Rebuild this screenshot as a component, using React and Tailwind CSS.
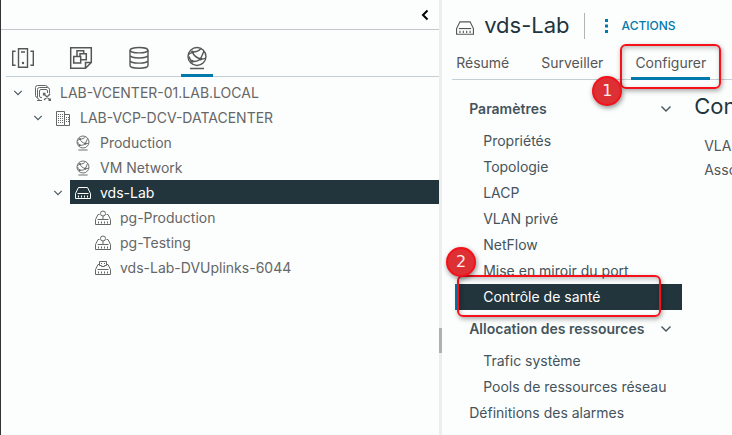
import React, { useState } from "react";

const treeItems = [
  { id: "vc", level: 0, icon: "vcenter", label: "LAB-VCENTER-01.LAB.LOCAL", open: true },
  { id: "dc", level: 1, icon: "datacenter", label: "LAB-VCP-DCV-DATACENTER", open: true },
  { id: "prod", level: 2, icon: "network", label: "Production" },
  { id: "vm", level: 2, icon: "network", label: "VM Network" },
  { id: "vds", level: 2, icon: "switch", label: "vds-Lab", open: true },
  { id: "pg1", level: 3, icon: "portgroup", label: "pg-Production" },
  { id: "pg2", level: 3, icon: "portgroup", label: "pg-Testing" },
  { id: "up", level: 3, icon: "uplink", label: "vds-Lab-DVUplinks-6044" },
];

const indents = ["pl-[7px]", "pl-[27px]", "pl-[47px]", "pl-[67px]"];

const navGroups = [
  {
    title: "Paramètres",
    items: [
      "Propriétés",
      "Topologie",
      "LACP",
      "VLAN privé",
      "NetFlow",
      "Mise en miroir du port",
      "Contrôle de santé",
    ],
  },
  {
    title: "Allocation des ressources",
    items: ["Trafic système", "Pools de ressources réseau"],
  },
];

function Chevron({ className }) {
  return (
    <svg className={className} viewBox="0 0 12 12" fill="none" stroke="currentColor" strokeWidth="1.4">
      <path d="M1.5 3.5 6 8l4.5-4.5" />
    </svg>
  );
}

function Icon({ name, className }) {
  const common = {
    className,
    fill: "none",
    stroke: "currentColor",
    "aria-hidden": true,
  };

  if (name === "hosts") {
    return (
      <svg {...common} viewBox="0 0 24 24" strokeWidth="1.4">
        <path d="M7.500 2.700h9v18.600h-9zM10 6h4M4.600 5.200H1.700v14h2.900M19.400 5.200h2.900v14h-2.900" />
        <circle cx="12" cy="17" r="1.200" fill="currentColor" stroke="none" />
      </svg>
    );
  }
  if (name === "vms") {
    return (
      <svg {...common} viewBox="0 0 24 24" strokeWidth="1.5">
        <path d="M1.700 1.700h20.600v14.800l-5.800 5.800H1.700zM22.300 16.500h-5.800v5.800" />
        <path d="M4.700 10.500h7v6.500h-7zM8 10V4.700h6.700v3M11 10V7.700h6.300v6h-5" />
      </svg>
    );
  }
  if (name === "storage") {
    return (
      <svg {...common} viewBox="0 0 24 24" strokeWidth="1.4">
        <ellipse cx="12" cy="4.200" rx="9" ry="2.700" />
        <path d="M3 4.200v15.300c0 1.500 4 2.800 9 2.800s9-1.300 9-2.800V4.200M3 9.300c0 1.500 4 2.700 9 2.700s9-1.200 9-2.700M3 14.400c0 1.500 4 2.700 9 2.700s9-1.200 9-2.700" />
      </svg>
    );
  }
  if (name === "network") {
    return (
      <svg {...common} viewBox="0 0 24 24" strokeWidth="1.4">
        <circle cx="12" cy="10.500" r="9" />
        <path d="M5 22.500h14M3.500 8.500l4-2.500M7.500 6c3.500.2 6-.8 8.500-3.500M7.500 6c1 3.500 3.500 5.500 8 7M15.500 13l3.500-8M15.500 13c-3 2.500-6 3-9 2M15.500 13c2 .2 3.500 0 5-1M7 15.500c-1.500-1.500-2.500-3-3-5" />
        <g fill="currentColor" stroke="none">
          <circle cx="7.500" cy="6" r="1.500" />
          <circle cx="15.500" cy="13" r="1.600" />
          <circle cx="7" cy="15.200" r="1.500" />
        </g>
      </svg>
    );
  }
  if (name === "vcenter") {
    return (
      <svg {...common} viewBox="0 0 16 16" strokeWidth="1">
        <path d="M2.500 12.500A2 2 0 0 1 .5 10.500v-8a2 2 0 0 1 2-2h8a2 2 0 0 1 2 2" />
        <path d="M4.500 14.500a2 2 0 0 1-2-2v-8a2 2 0 0 1 2-2h8a2 2 0 0 1 2 2v4" />
        <path d="M7 12.500H6A1.500 1.500 0 0 1 4.500 11V6A1.500 1.500 0 0 1 6 4.500h5A1.500 1.500 0 0 1 12.500 6v2M2 15.500h5" />
        <path strokeWidth="1.300" d="m9 9 6 6M15 9l-6 6M8.500 10.500v-2h2M15.500 13.500v2h-2" />
      </svg>
    );
  }
  if (name === "datacenter") {
    return (
      <svg {...common} viewBox="0 0 16 16" strokeWidth="1">
        <path d="M1.500 15.500v-14h8v14zM9.500 4.500h5v11h-5" />
        <path strokeDasharray="1 1" d="M3 4.500h5M3 6.500h5M3 8.500h5M3 10.500h5M3 12.500h5M11 7.500h3M11 9.500h3M11 11.500h3" />
      </svg>
    );
  }

  // the switch, port group and uplink icons share the same body
  return (
    <svg {...common} viewBox="0 0 16 16" strokeWidth="1">
      {name === "switch" && <path d="M3.500 2.500h9l3 6v5H.5v-5z" />}
      {name === "switch" && <path d="M2.500 8.500h11" />}
      {name !== "switch" && <path d="M4.500 4.500H3l-2.500 5v5h15v-5l-2.500-5h-1.500M2.500 9.500h11" />}
      {name === "portgroup" && <circle cx="8" cy="3.500" r="2.500" />}
      {name === "portgroup" && <path d="M8 6v3" />}
      {name === "uplink" && <path d="M4.500 1.500h7v4h-2v1h-3v-1h-2zM6.500 3v1M9.500 3v1" />}
      {name === "switch" ? (
        <path strokeWidth="2" strokeDasharray="1 2" d="M3 11.500h10.500" />
      ) : (
        <path strokeWidth="2" strokeDasharray="1 2" d="M3 12.500h10.500" />
      )}
    </svg>
  );
}

function Badge({ children, className }) {
  return (
    <span
      className={`absolute z-20 flex size-[30px] items-center justify-center rounded-full border-2 border-[#f5101a] bg-[#dc3034] font-['DejaVu_Sans'] text-base font-normal text-[#ffecec] shadow-[1px_2px_5px_rgba(0,0,0,0.45)] ${className}`}
    >
      {children}
    </span>
  );
}

function Frame({ className }) {
  return (
    <span
      className={`pointer-events-none absolute z-10 rounded-md border-2 border-[#f5101a] shadow-[1px_2px_5px_rgba(0,0,0,0.35),inset_1px_2px_5px_rgba(0,0,0,0.25)] ${className}`}
    />
  );
}

function InventoryPanel() {
  const [selected, setSelected] = useState("vds");
  const views = [
    { icon: "hosts", label: "Hôtes et clusters" },
    { icon: "vms", label: "VM et modèles" },
    { icon: "storage", label: "Stockage" },
    { icon: "network", label: "Mise en réseau" },
  ];

  return (
    <aside className="w-3/5 shrink-0 border-l border-[#333]">
      <div className="flex h-[30px] items-center justify-end border-b border-[#c1c9ce] pr-2">
        <button aria-label="Réduire" className="text-black">
          <svg className="size-3" viewBox="0 0 12 12" fill="none" stroke="currentColor" strokeWidth="2">
            <path d="M8.500 1.500 4 6l4.500 4.500" />
          </svg>
        </button>
      </div>
      <div className="ml-[5px] flex h-[47px] gap-[26px] border-b border-[#c5d0d6] pl-px text-[#565656]">
        {views.map((view) => (
          <button
            key={view.icon}
            aria-label={view.label}
            className={`-mb-px flex w-8 items-center justify-center border-b-3 pt-3 ${
              view.icon === "network" ? "border-[#0079ad]" : "border-transparent"
            }`}
          >
            <Icon name={view.icon} className="size-6" />
          </button>
        ))}
      </div>
      <ul className="pt-[3px] text-[#666]">
        {treeItems.map((item) => (
          <li key={item.id} className={`flex h-[25px] items-start ${indents[item.level]}`}>
            <span className="flex h-[26px] w-[22px] shrink-0 items-center pl-[5px] text-[#4a5960]">
              {item.open && <Chevron className="size-[10px]" />}
            </span>
            <button
              onClick={() => setSelected(item.id)}
              className={`flex h-6 grow items-center gap-[9px] px-[5px] pt-[2px] text-left whitespace-nowrap ${
                selected === item.id ? "bg-[#22343c] text-white" : ""
              }`}
            >
              <Icon name={item.icon} className="size-4 shrink-0" />
              {item.label}
            </button>
          </li>
        ))}
      </ul>
    </aside>
  );
}

function ConfigNav() {
  return (
    <nav className="w-[230px] shrink-0 pl-[3px] text-[#45535b]">
      {navGroups.map((group) => (
        <div key={group.title}>
          <button className="flex h-[38px] w-full items-center justify-between pr-[10px] pl-[14px] text-left font-semibold">
            {group.title}
            <Chevron className="size-3" />
          </button>
          {group.items.map((item) =>
            item === "Contrôle de santé" ? (
              <div key={item} className="relative">
                <a
                  href="#sante"
                  className="flex h-[26px] items-center border-l-3 border-[#0079ad] bg-[#22343c] pl-[25px] text-white"
                >
                  {item}
                </a>
                <Frame className="-top-[9px] left-[2px] h-[42px] w-[204px]" />
                <Badge className="-top-[37px] -left-[9px]">2</Badge>
              </div>
            ) : (
              <a key={item} href="#config" className="flex h-[26px] items-center pl-[28px]">
                {item}
              </a>
            )
          )}
        </div>
      ))}
      <a href="#alarmes" className="flex h-[26px] items-center pl-[14px]">
        Définitions des alarmes
      </a>
    </nav>
  );
}

function App() {
  return (
    <div className="flex min-h-screen overflow-hidden bg-[#fcfefe] font-[Inter,'Open_Sans',sans-serif] text-sm">
      <InventoryPanel />
      <div className="flex w-[3px] shrink-0 flex-col bg-[#ededed] pt-[328px]">
        <div className="h-[25px] bg-[#b0b0b0]" />
      </div>

      <main className="min-w-0 grow pl-[10px]">
        <header className="flex h-[52px] items-center pl-1">
          <Icon name="switch" className="mt-1 size-[18px] text-[#565656]" />
          <h1 className="ml-[10px] text-[22px] text-[#22343c]">vds-Lab</h1>
          <span className="ml-[14px] h-[26px] w-px bg-[#b3b3b3]" />
          <button className="ml-5 flex items-center gap-[14px] text-xs font-medium text-[#0079ad]">
            <svg className="h-4 w-[3px]" viewBox="0 0 3 16" fill="currentColor">
              <path d="M0 1h3v3H0zM0 6.500h3v3H0zM0 12h3v3H0z" />
            </svg>
            ACTIONS
          </button>
        </header>

        <div className="flex h-7 gap-6 border-b border-[#c5d0d6] text-[#565656]">
          <button className="px-1 pb-[5px]">Résumé</button>
          <button className="px-1 pb-[5px]">Surveiller</button>
          <div className="relative -mb-px flex">
            <button className="border-b-3 border-[#0079ad] px-1 pb-[3px]">Configurer</button>
            <Frame className="-top-2 -left-[11px] h-[45px] w-[101px]" />
            <Badge className="top-6 -left-[39px]">1</Badge>
          </div>
        </div>

        <div className="flex pt-[10px]">
          <ConfigNav />
          <section className="min-w-0 overflow-hidden pl-3 whitespace-nowrap">
            <h2 className="text-[22px] leading-8 text-[#22343c]">Contrôle de santé</h2>
            <ul className="pt-3 pl-[10px] leading-6 text-[#565656]">
              <li>VLAN et MTU</li>
              <li>Association et basculement</li>
            </ul>
          </section>
        </div>
      </main>
    </div>
  );
}

export default App;
